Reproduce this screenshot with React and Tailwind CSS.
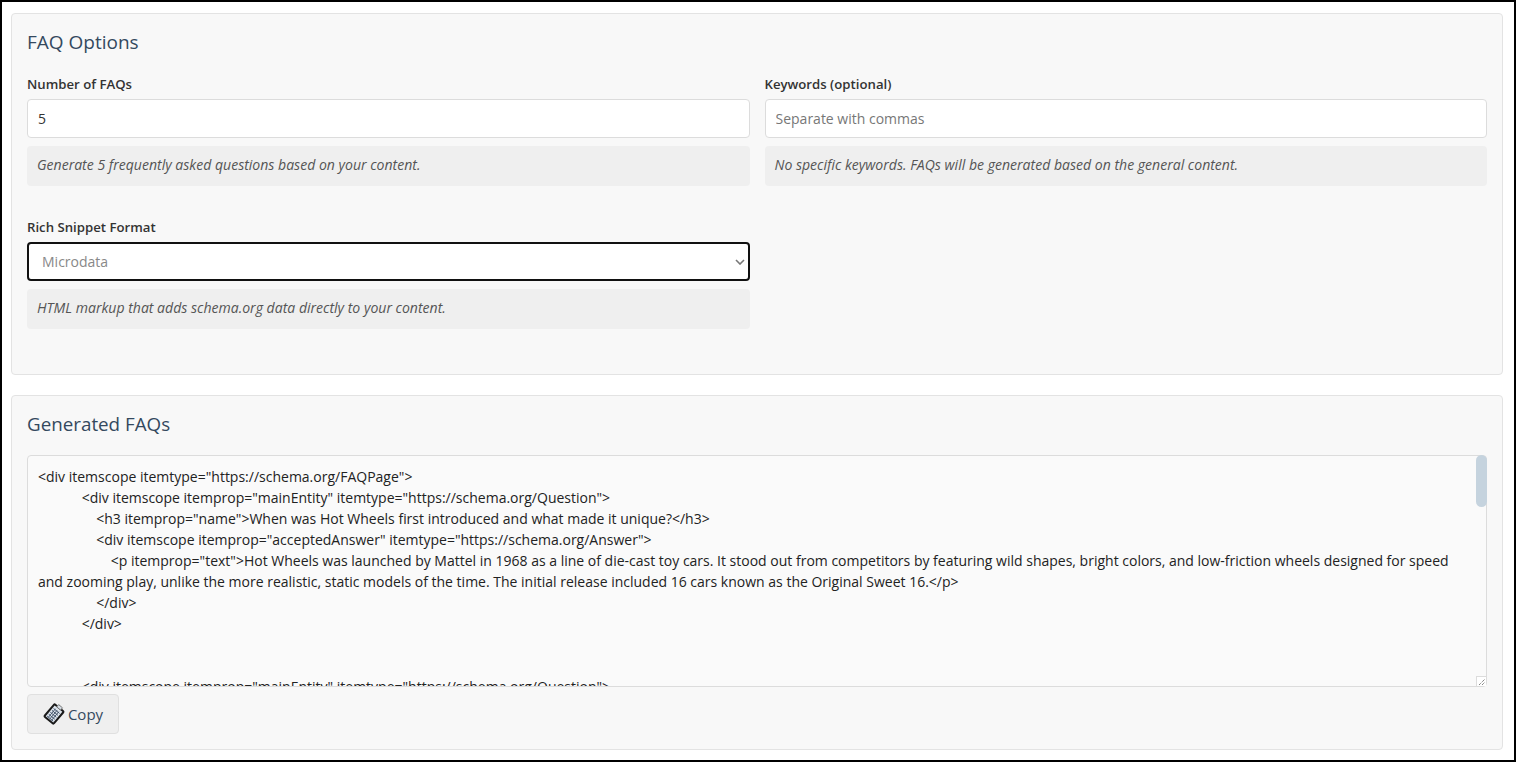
const FAQ_TEXT = `<div itemscope itemtype="https://schema.org/FAQPage">
            <div itemscope itemprop="mainEntity" itemtype="https://schema.org/Question">
                <h3 itemprop="name">When was Hot Wheels first introduced and what made it unique?</h3>
                <div itemscope itemprop="acceptedAnswer" itemtype="https://schema.org/Answer">
                    <p itemprop="text">Hot Wheels was launched by Mattel in 1968 as a line of die-cast toy cars. It stood out from competitors by featuring wild shapes, bright colors, and low-friction wheels designed for speed and zooming play, unlike the more realistic, static models of the time. The initial release included 16 cars known as the Original Sweet 16.</p>
                </div>
            </div>


            <div itemscope itemprop="mainEntity" itemtype="https://schema.org/Question">`;

function Field({ label, hint, children }) {
  return (
    <div>
      <label className="mb-[5px] block text-[13.2px] leading-[20px] font-semibold text-[#333]">{label}</label>
      {children}
      <p className="mt-2 rounded bg-[#efefef] px-[10px] pt-[9px] pb-[11px] text-[14.05px] leading-[20px] text-[#555] italic">{hint}</p>
    </div>
  );
}

export default function App() {
  return (
    <div className="h-[762px] overflow-hidden border-2 border-black bg-white pt-[11px] pr-[11px] pl-[9px] font-['Open_Sans','Noto_Sans',sans-serif] text-sm">
      <section className="h-[362px] rounded border border-[#e3e3e3] bg-[#f8f8f8] px-[15px] pt-[15px]">
        <h2 className="mb-[18px] text-[19px] leading-[27px] text-[#34495e]">FAQ Options</h2>
        <div className="grid grid-cols-2 gap-x-[15px]">
          <Field label="Number of FAQs" hint="Generate 5 frequently asked questions based on your content.">
            <input
              readOnly
              value="5"
              className="block h-[39px] w-full rounded border border-[#dcdcdc] bg-white px-[10px] text-sm text-[#333] outline-none"
            />
          </Field>
          <Field label="Keywords (optional)" hint="No specific keywords. FAQs will be generated based on the general content.">
            <input
              readOnly
              placeholder="Separate with commas"
              className="block h-[39px] w-full rounded border border-[#dcdcdc] bg-white px-[10px] text-sm text-[#333] outline-none placeholder:text-[#777]"
            />
          </Field>
          <div className="mt-[31px]">
            <Field label="Rich Snippet Format" hint="HTML markup that adds schema.org data directly to your content.">
              <div className="flex h-[39px] w-full items-center justify-between rounded border-2 border-[#111] bg-white pr-[3px] pl-[13px] text-sm text-[#888]">
                <span>Microdata</span>
                <svg width="10" height="6" viewBox="0 0 10 6" fill="none" stroke="#777" strokeWidth="1.6">
                  <path d="M1 1l4 4 4-4" />
                </svg>
              </div>
            </Field>
          </div>
        </div>
      </section>

      <section className="mt-5 h-[355px] rounded border border-[#e3e3e3] bg-[#f8f8f8] px-[15px] pt-[15px]">
        <h2 className="mb-[17px] text-[18.8px] leading-[27px] text-[#34495e]">Generated FAQs</h2>
        <div className="relative">
          <textarea
            readOnly
            defaultValue={FAQ_TEXT}
            className="block h-[232px] w-full resize-none overflow-hidden rounded border border-[#dcdcdc] bg-[#fafafa] py-[10px] pr-5 pl-[10px] text-sm leading-[21px] text-[#222] outline-none"
          />
          <div className="absolute top-0 right-0 h-[52px] w-[11px] rounded-full bg-[#c5d3de]" />
          <div className="absolute right-px bottom-px flex h-[10px] w-[10px] items-end justify-end border-t border-l border-[#dcdcdc] bg-white">
            <svg width="8" height="8" viewBox="0 0 8 8" stroke="#555" strokeWidth="1" strokeDasharray="1 1">
              <path d="M1 7l6-6M4 7l3-3" />
            </svg>
          </div>
        </div>
        <button className="mt-[7px] flex h-10 w-[92px] items-center justify-center gap-[3px] rounded border border-[#e0e0e0] bg-[#efefef] text-[15px] text-[#34495e]">
          <svg width="22" height="24" viewBox="0 0 22 24">
            <g transform="rotate(40 11 12)">
              <rect x="5" y="4" width="12" height="16" rx="1" fill="#dfe6ee" stroke="#1a1a1a" strokeWidth="2" />
              <path d="M7 8h8M7 10.5h8M7 13h8M7 15.5h8M7 18h8M8.8 7v11.5M11 7v11.5M13.2 7v11.5" stroke="#44546a" strokeWidth="0.9" />
              <rect x="8.5" y="1.8" width="5" height="3" fill="#d5dde5" stroke="#777" strokeWidth="0.9" />
            </g>
          </svg>
          <span className="pt-px">Copy</span>
        </button>
      </section>
    </div>
  );
}
